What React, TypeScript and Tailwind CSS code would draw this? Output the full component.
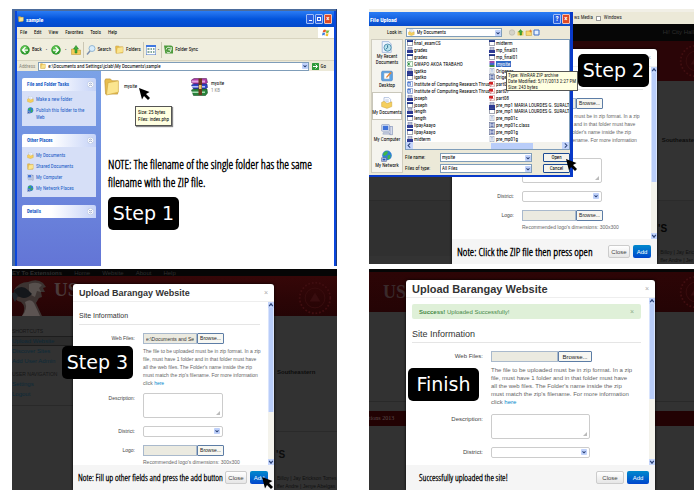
import React, { useId } from "react";

type Kind = "win" | "cpp" | "xls" | "doc" | "zip" | "txt" | "cls" | "pdf";

const leftFiles: [Kind, string][] = [
  ["win", "final_examCS"],
  ["cpp", "grades"],
  ["win", "grades"],
  ["xls", "GWAPO AKOA TRABAHO"],
  ["cpp", "igatko"],
  ["win", "igatko"],
  ["doc", "Institute of Computing Research Thrust"],
  ["doc", "Institute of Computing Research Thrust"],
  ["cpp", "joseph"],
  ["win", "joseph"],
  ["cpp", "length"],
  ["win", "length"],
  ["cpp", "lipayAaayo"],
  ["win", "lipayAaayo"],
  ["cpp", "midterm"],
];

const rightFiles: [Kind, string][] = [
  ["win", "midterm"],
  ["cpp", "mp_final01"],
  ["win", "mp_final01"],
  ["zip", "mysite"],
  ["txt", "Origenes"],
  ["cls", "Origenes"],
  ["pdf", "part06"],
  ["pdf", "part07"],
  ["pdf", "part08"],
  ["cpp", "pre_mp1 MARIA LOURDES G. SURALTA"],
  ["win", "pre_mp1 MARIA LOURDES G. SURALTA"],
  ["txt", "pre_mp01c"],
  ["cls", "pre_mp01c.class"],
  ["cls", "pre_mp01g"],
  ["txt", "pre_mp01g"],
];

function FileIcon({ kind }: { kind: Kind }) {
  return (
    <svg viewBox="0 0 12 12" className="size-1.5 shrink-0">
      {kind === "win" && (
        <>
          <rect x="0.5" y="1" width="11" height="10" fill="#fff" stroke="#444c66" />
          <rect x="0" y="0.5" width="12" height="3.5" fill="#1c2f86" />
        </>
      )}
      {kind === "cpp" && (
        <>
          <rect x="2" y="0" width="8" height="8" fill="#b9bed6" stroke="#6d7391" />
          <rect x="0" y="6" width="12" height="6" fill="#2d3a94" />
        </>
      )}
      {kind === "xls" && (
        <>
          <rect x="2" y="0.5" width="9" height="11" fill="#f4fff4" stroke="#4a8a55" />
          <path d="M1 3l5 6M6 3L1 9" stroke="#1f8a36" strokeWidth="2" />
        </>
      )}
      {kind === "doc" && (
        <>
          <rect x="2" y="0.5" width="9" height="11" fill="#fff" stroke="#4c6bb5" />
          <rect x="0" y="2" width="8" height="7" fill="#4b78cf" />
          <path d="M1 3l1.500 5L4 4l1.500 4L7 3" stroke="#fff" fill="none" />
        </>
      )}
      {kind === "zip" && (
        <>
          <rect x="1" y="0" width="10" height="4" fill="#9a4aa8" />
          <rect x="1" y="4" width="10" height="4" fill="#4565d0" />
          <rect x="1" y="8" width="10" height="4" fill="#3b8a4a" />
        </>
      )}
      {kind === "txt" && (
        <>
          <rect x="2" y="0.5" width="8" height="11" fill="#fff" stroke="#8391ab" />
          <path d="M4 3h4M4 5.500h4M4 8h4" stroke="#7291cc" />
        </>
      )}
      {kind === "cls" && (
        <>
          <rect x="1" y="0.5" width="10" height="11" fill="#dde2f0" stroke="#4b5680" />
          <path d="M3 3h6M3 6h6M3 9h6" stroke="#40549c" strokeWidth="1.500" />
        </>
      )}
      {kind === "pdf" && (
        <>
          <rect x="2" y="0.5" width="9" height="11" fill="#fff" stroke="#b88" />
          <path d="M0 2h8v5H0z" fill="#d22222" />
          <path d="M3 11l3-6 4 4" stroke="#d22222" fill="none" />
        </>
      )}
    </svg>
  );
}

function Folder({ className }: { className: string }) {
  return (
    <svg viewBox="0 0 20 20" preserveAspectRatio="none" className={className}>
      <path d="M1 4l1-2h6l2 2h7v14H2z" fill="#e7bd4e" stroke="#b98e2c" strokeWidth="0.700" />
      <path d="M5 6l13-2v12L3 19z" fill="#fbe58f" stroke="#d0a63f" strokeWidth="0.700" />
    </svg>
  );
}

function Cursor({ className }: { className: string }) {
  return (
    <svg viewBox="0 0 22 24" className={className}>
      <path d="M0 0l21 8-7 4 8 8-4 4-8-8-4 7z" fill="#000" />
    </svg>
  );
}

function Rar() {
  return (
    <svg viewBox="0 0 34 36" className="h-[18px] w-[17px] shrink-0">
      <path d="M1 4l5-3h25l2 8-4 3H6L1 9z" fill="#b23aa8" stroke="#431047" />
      <path d="M1 5h27v4H1z" fill="#e3a6df" />
      <path d="M1 14l5-2h26l1 7-4 3H5z" fill="#2f46c8" stroke="#131b5e" />
      <path d="M2 16h26v3H2z" fill="#b7c2f5" />
      <path d="M1 24l5-2h26l1 8-4 5H5z" fill="#27843b" stroke="#0c3a17" />
      <path d="M2 27h26v3H2z" fill="#a9dcb2" />
      <path d="M15 1h7v33h-7z" fill="#6b3a1e" />
      <path d="M16 14h5v8h-5z" fill="#e8c765" />
    </svg>
  );
}

function Computer({ className }: { className: string }) {
  return (
    <svg viewBox="0 0 20 20" className={className}>
      <rect x="1" y="1" width="13" height="11" rx="1" fill="#dfe6f5" stroke="#7d8db5" />
      <rect x="3" y="3" width="9" height="7" fill="#3f72d8" />
      <path d="M4 14h9l2 3H3z" fill="#c6cde0" stroke="#7d8db5" strokeWidth="0.700" />
      <rect x="15" y="4" width="4" height="14" fill="#d7dcec" stroke="#7d8db5" />
    </svg>
  );
}

function Globe({ className }: { className: string }) {
  return (
    <svg viewBox="0 0 20 20" className={className}>
      <circle cx="10" cy="9" r="8" fill="#2f7fd6" />
      <path d="M5 4q4-3 7-1l-2 4-4 3-3-2zM11 9l5-1-1 6-4 2z" fill="#3fb548" />
      <path d="M1 13h8v6H1z" fill="#dfe6f5" stroke="#44538a" />
      <path d="M2.500 14.500h5v3h-5z" fill="#2353b8" />
    </svg>
  );
}

function DocFolder({ className }: { className: string }) {
  return (
    <svg viewBox="0 0 20 20" className={className}>
      <path d="M5 1h8l3 3v10H5z" fill="#fff" stroke="#8aa3cf" />
      <path d="M7 5h6M7 8h6" stroke="#8aa3cf" />
      <path d="M1 9l4-2 5 4 8-3v8l-8 3-9-3z" fill="#f5cf5e" stroke="#c39a33" strokeWidth="0.700" />
    </svg>
  );
}

function RecentDocs({ className }: { className: string }) {
  return (
    <svg viewBox="0 0 20 20" className={className}>
      <path d="M2 1h11l4 4v14H2z" fill="#eef5ff" stroke="#7d9cd0" />
      <circle cx="11" cy="11" r="6" fill="#b9e3ee" stroke="#4f8fae" strokeWidth="1.500" />
      <path d="M11 7v4l-3 3" stroke="#23688a" strokeWidth="1.500" fill="none" />
    </svg>
  );
}

function DesktopPad({ className }: { className: string }) {
  return (
    <svg viewBox="0 0 20 20" className={className}>
      <rect x="1" y="2" width="18" height="16" rx="2" fill="#5aa5e8" stroke="#3f78c0" />
      <rect x="5" y="5" width="9" height="10" fill="#fff" stroke="#9ab" />
      <path d="M8 12l8-9 2 2-8 8z" fill="#e3873a" />
    </svg>
  );
}

function RoundArrow({ back }: { back?: boolean }) {
  return (
    <svg viewBox="0 0 20 20" className="size-[10px] shrink-0">
      <circle cx="10" cy="10" r="9.500" fill="#2f9a2f" />
      <circle cx="9" cy="8" r="6.500" fill="#5cc04e" />
      {back ? (
        <path d="M11 4l-6 6 6 6M5 10h11" stroke="#fff" strokeWidth="2.500" fill="none" />
      ) : (
        <path d="M9 4l6 6-6 6M15 10H4" stroke="#fff" strokeWidth="2.500" fill="none" />
      )}
    </svg>
  );
}

function DropMark() {
  return (
    <svg viewBox="0 0 10 10" className="pointer-events-none block size-[6px] shrink-0">
      <rect width="10" height="10" rx="1.500" fill="#bfd1fa" />
      <path d="M2.500 4L5 6.500 7.500 4" stroke="#2c4378" strokeWidth="1.700" fill="none" />
    </svg>
  );
}

function StepBadge({ children, className }: { children: string; className: string }) {
  return (
    <div
      className={
        "flex h-[33px] w-[71px] items-center justify-center rounded-[5px] bg-black font-['DejaVu_Sans',sans-serif] text-[19px] leading-none text-white " +
        className
      }
    >
      {children}
    </div>
  );
}

function TaskCard({ title, open, children }: { title: string; open?: boolean; children?: React.ReactNode }) {
  return (
    <section>
      <header className="flex h-[13px] items-center justify-between rounded-t-[2px] bg-linear-to-r from-white from-40% to-[#c6d3f7] pr-0.5 pl-[5px]">
        <h3 className="font-bold whitespace-nowrap text-[#215dc6]">{title}</h3>
        <svg viewBox="0 0 14 14" className="size-[7px] shrink-0">
          <circle cx="7" cy="7" r="6.500" fill="#fff" stroke="#9fb0dc" />
          {open ? (
            <path d="M4 6.500l3-3 3 3M4 10.500l3-3 3 3" stroke="#24418f" fill="none" />
          ) : (
            <path d="M4 3.500l3 3 3-3M4 7.500l3 3 3-3" stroke="#24418f" fill="none" />
          )}
        </svg>
      </header>
      {children && <div className="bg-[#d6dff7] pl-[5px]">{children}</div>}
    </section>
  );
}

function TaskLink({ icon, children }: { icon: React.ReactNode; children: React.ReactNode }) {
  return (
    <a href="#" className="flex items-start gap-0.5 leading-[7px] text-[#215dc6]">
      {icon}
      <span>{children}</span>
    </a>
  );
}

function ExplorerPanel() {
  return (
    <section className="relative flex min-h-[257px] flex-col border-r border-[#1d3a7a] bg-[#4c6c9c] pt-0.5 pl-[3px] font-['Roboto_Condensed','Liberation_Sans',sans-serif] text-[5px] leading-[7px] text-black">
      <div className="flex flex-1 flex-col border-r-2 border-l-2 border-[#0a46dc]">
        <header className="flex h-4 items-center justify-between bg-linear-to-b from-[#2a7cf5] via-[#0354dc] to-[#0549cb] pr-0.5 pl-px">
          <div className="flex items-center gap-0.5">
            <Folder className="size-[6px]" />
            <h2 className="text-[6px] font-bold text-white">sample</h2>
          </div>
          <div className="flex gap-px text-[7px] leading-none font-bold text-white">
            <button aria-label="Minimize" className="flex h-[10px] w-2 items-end justify-center rounded-[1px] border border-[#9fbdf5] bg-[#2a5fe0] pb-0.5">
              <span className="h-px w-[3px] bg-white" />
            </button>
            <button aria-label="Maximize" className="flex h-[10px] w-2 items-center justify-center rounded-[1px] border border-[#9fbdf5] bg-[#2a5fe0]">
              <span className="size-1 border border-white" />
            </button>
            <button aria-label="Close" className="flex h-[10px] w-2 items-center justify-center rounded-[1px] border border-[#f3c1b4] bg-[#dd4a26]">
              ×
            </button>
          </div>
        </header>
        <nav className="flex h-[11px] items-center justify-between bg-[#ece9d8] pl-[3px]">
          <div className="flex gap-[7px]">
            <span>File</span>
            <span>Edit</span>
            <span>View</span>
            <span>Favorites</span>
            <span>Tools</span>
            <span>Help</span>
          </div>
          <div className="flex h-full w-4 items-center justify-center bg-white">
            <svg viewBox="0 0 16 16" className="size-2">
              <path d="M3 2q3-2 5 0L7 7Q4 5 1 7z" fill="#e8582a" />
              <path d="M9 2q3 2 6 0l-2 5q-3 2-5 0z" fill="#7ab83c" />
              <path d="M1 8q3-2 5 0l-1 5q-2-2-5 0z" fill="#3f7fe0" />
              <path d="M8 8q2 2 5 0l-1 6q-3 1-5-1z" fill="#f4c12e" />
            </svg>
          </div>
        </nav>
        <div className="flex h-[22px] items-center gap-1 border-t border-[#d8d4c0] bg-[#f0eede] pl-[3px]">
          <RoundArrow back />
          <span className="-ml-0.5">Back</span>
          <span className="font-bold">·</span>
          <RoundArrow />
          <span className="font-bold">·</span>
          <svg viewBox="0 0 20 20" className="size-[10px] shrink-0">
            <path d="M1 8h7l2 2h9v9H1z" fill="#f2cc58" stroke="#b98e2c" />
            <path d="M8 16V8H5l5-7 5 7h-3v8z" fill="#3fae3a" stroke="#1e7a1f" />
          </svg>
          <span className="-ml-0.5 h-4 w-px bg-[#cbc7b4]" />
          <svg viewBox="0 0 20 20" className="-ml-0.5 size-[10px] shrink-0">
            <circle cx="12" cy="7" r="6" fill="#d7ecfb" stroke="#7ba5c9" strokeWidth="1.500" />
            <path d="M8 12l-6 7" stroke="#7c8fae" strokeWidth="3" />
          </svg>
          <span className="-ml-0.5">Search</span>
          <Folder className="size-[9px] shrink-0" />
          <span className="-ml-0.5">Folders</span>
          <span className="-ml-0.5 h-4 w-px bg-[#cbc7b4]" />
          <svg viewBox="0 0 20 20" className="-ml-0.5 size-[10px] shrink-0">
            <rect x="0.5" y="0.5" width="19" height="19" fill="#fff" stroke="#3f6fc7" />
            <rect width="20" height="4" fill="#3f78df" />
            <path d="M3 8h4M9 8h3M14 8h3M3 14h4M9 14h3M14 14h3" stroke="#5f8f7f" strokeWidth="3" />
          </svg>
          <span className="-ml-0.5 font-bold">·</span>
          <span className="-ml-0.5 h-4 w-px bg-[#cbc7b4]" />
          <svg viewBox="0 0 20 20" className="-ml-0.5 size-[9px] shrink-0">
            <path d="M0 1h16l4 3v15H3z" fill="#4d9b3c" />
            <path d="M5 10a5 5 0 0 1 9-3l2-2v6h-6l2-2M15 11a5 5 0 0 1-9 4" stroke="#fff" strokeWidth="1.800" fill="none" />
          </svg>
          <span className="-ml-0.5">Folder Sync</span>
        </div>
        <div className="flex h-[11px] items-center gap-[3px] border-t border-[#d8d4c0] bg-[#ece9d8] pr-2 pl-0.5">
          <label htmlFor="address" className="text-[#8a887c]">
            Address
          </label>
          <div className="flex h-[9px] min-w-0 flex-1 items-center gap-0.5 border border-[#7f9db9] bg-white pl-px">
            <Folder className="size-[6px] shrink-0" />
            <input
              id="address"
              className="min-w-0 flex-1 outline-none"
              defaultValue="e:\Documents and Settings\jclab\My Documents\sample"
            />
            <DropMark />
          </div>
          <button className="flex items-center gap-0.5">
            <svg viewBox="0 0 14 14" className="size-[7px]">
              <rect width="14" height="14" rx="1" fill="#2f9a3a" />
              <path d="M2 7h8M7 3l4 4-4 4" stroke="#fff" strokeWidth="2" fill="none" />
            </svg>
            Go
          </button>
        </div>
        <div className="flex flex-1">
          <aside className="flex w-[84px] shrink-0 flex-col gap-2 bg-linear-to-b from-[#7ba2e7] to-[#6375d6] px-[5px] pt-[7px]">
            <TaskCard title="File and Folder Tasks" open>
              <div className="flex h-[35px] flex-col gap-1 pt-[5px]">
                <TaskLink icon={<DocFolder className="size-[7px] shrink-0" />}>Make a new folder</TaskLink>
                <TaskLink icon={<Globe className="size-[7px] shrink-0" />}>
                  Publish this folder to the
                  <br />
                  Web
                </TaskLink>
              </div>
            </TaskCard>
            <TaskCard title="Other Places" open>
              <div className="flex h-[50px] flex-col gap-1 pt-[5px]">
                <TaskLink icon={<DocFolder className="size-[7px] shrink-0" />}>My Documents</TaskLink>
                <TaskLink icon={<Folder className="size-[7px] shrink-0" />}>Shared Documents</TaskLink>
                <TaskLink icon={<Computer className="size-[7px] shrink-0" />}>My Computer</TaskLink>
                <TaskLink icon={<Globe className="size-[7px] shrink-0" />}>My Network Places</TaskLink>
              </div>
            </TaskCard>
            <TaskCard title="Details" />
          </aside>
          <main className="relative min-w-0 flex-1 bg-white pt-[6px] pl-[3px]">
            <div className="flex gap-[54px]">
              <div className="flex items-center gap-1">
                <Folder className="h-[19px] w-4 shrink-0" />
                <span className="w-[13px]">mysite</span>
              </div>
              <div className="flex items-center gap-[3px]">
                <Rar />
                <span>
                  mysite
                  <br />
                  <span className="text-[#8c8c8c]">1 KB</span>
                </span>
              </div>
            </div>
            <Cursor className="absolute top-[17px] left-[38px] h-3 w-[11px]" />
            <div
              role="tooltip"
              className="absolute top-[35px] left-[34px] border border-[#555] bg-[#ffffe1] py-0.5 pr-0.5 pl-0.5 whitespace-nowrap shadow-[1px_1px_1px_#888]"
            >
              Size: 25 bytes
              <br />
              Files: index.php
            </div>
            <p className="mt-[60px] ml-1 font-['Open_Sans_Condensed_Light',sans-serif] text-[12px] leading-[18px] font-bold whitespace-nowrap">
              NOTE: The filename of the single folder has the same
              <br />
              filename with the ZIP file.
            </p>
            <StepBadge className="mt-[5px] ml-1">Step 1</StepBadge>
          </main>
        </div>
      </div>
    </section>
  );
}

function Scrollbar({ thumb }: { thumb: string }) {
  return (
    <div className="flex w-1.5 shrink-0 flex-col justify-between bg-[#f4f3ec]">
      <div>
        <svg viewBox="0 0 10 10" className="block size-1.5">
          <rect width="10" height="10" fill="#c4d5fc" />
          <path d="M2 7l3-4 3 4" stroke="#2c4378" strokeWidth="2" fill="none" />
        </svg>
        <div className={"border-x border-[#d9e4fd] bg-[#b9cdf9] " + thumb} />
      </div>
      <svg viewBox="0 0 10 10" className="block size-1.5">
        <rect width="10" height="10" fill="#c4d5fc" />
        <path d="M2 3l3 4 3-4" stroke="#2c4378" strokeWidth="2" fill="none" />
      </svg>
    </div>
  );
}

interface ModalProps {
  className: string;
  note: string;
  noteClass: string;
  bodyClass: string;
  thumb: string;
  wide?: boolean;
  alert?: boolean;
  path?: string;
}

function FileField({ id, value, wide }: { id: string; value?: string; wide?: boolean }) {
  return (
    <div className="flex h-[11px] items-stretch">
      <input
        id={id}
        readOnly
        defaultValue={value}
        className={
          "border border-[#a9b9cc] bg-[#ebeae0] px-0.5 text-[#333] outline-none " + (wide ? "w-[67px]" : "w-[54px]")
        }
      />
      <button
        className={
          "rounded-[1px] border border-[#5d7da6] bg-[#f7f7f2] leading-none text-[#222] " + (wide ? "w-[34px]" : "w-[27px]")
        }
      >
        Browse...
      </button>
    </div>
  );
}

function UploadModal({ className, note, noteClass, bodyClass, thumb, wide, alert, path }: ModalProps) {
  const id = useId();
  const label = "shrink-0 pt-px text-right text-[#444] " + (wide ? "w-[71px]" : "w-14");
  const row = "flex gap-2";
  const field = "rounded-[2px] border border-[#ccc] bg-white outline-none " + (wide ? "w-[99px]" : "w-20");
  return (
    <section
      role="dialog"
      aria-label="Upload Barangay Website"
      className={
        "relative flex flex-col overflow-hidden rounded-t-[3px] bg-white leading-2 shadow-[0_0_3px_#000] " +
        (wide ? "text-[6px] " : "text-[5px] ") +
        className
      }
    >
      <header className="flex h-[18px] shrink-0 items-center justify-between border-b border-[#eee] px-1.5">
        <h2 className={"font-bold whitespace-nowrap text-[#333] " + (wide ? "text-[11px]" : "text-[9px]")}>
          Upload Barangay Website
        </h2>
        <button aria-label="Close dialog" className="text-[7px] text-[#aaa]">
          ×
        </button>
      </header>
      <div className={"flex shrink-0 overflow-hidden " + bodyClass}>
        <div className="min-w-0 flex-1 pl-1.5">
          {alert && (
            <div className="mt-1.5 mr-2 flex h-[15px] items-center justify-between rounded-[2px] bg-[#dff0d8] px-[7px] text-[#468847]">
              <span>
                <b>Success!</b> Uploaded Successfully!
              </span>
              <button aria-label="Dismiss" className="text-[7px] text-[#8fae8a]">
                ×
              </button>
            </div>
          )}
          <h3
            className={
              "mr-2 border-b border-[#e5e5e5] pb-0.5 leading-3 text-[#333] " +
              (wide ? "pt-[9px] text-[9px]" : "pt-2 text-[7px]")
            }
          >
            Site Information
          </h3>
          <div className={"mt-2 " + row}>
            <label htmlFor={id + "web"} className={label}>
              Web Files:
            </label>
            <div>
              <FileField id={id + "web"} value={path} wide={wide} />
              <p className={"whitespace-nowrap text-[#666] " + (wide ? "mt-1" : "mt-[3px]")}>
                The file to be uploaded must be in zip format. In a zip
                <br />
                file, must have 1 folder and in that folder must have
                <br />
                all the web files. The Folder's name inside the zip
                <br />
                must match the zip's filename. For more information
                <br />
                click{" "}
                <a href="#" className="text-[#0088cc]">
                  here
                </a>
              </p>
            </div>
          </div>
          <div className={row + (wide ? " mt-2" : " mt-1.5")}>
            <label htmlFor={id + "desc"} className={label}>
              Description:
            </label>
            <div className="relative">
              <textarea id={id + "desc"} className={"block h-[25px] resize-none " + field} />
              <svg viewBox="0 0 8 8" className="absolute right-[3px] bottom-[3px] size-1">
                <path d="M0 8l8-8v8z" fill="#bbb" />
              </svg>
            </div>
          </div>
          <div className={"mt-2 " + row}>
            <label htmlFor={id + "dist"} className={label}>
              District:
            </label>
            <div className="relative">
              <select id={id + "dist"} className={"block h-[11px] appearance-none " + field}>
                <option></option>
              </select>
              <span className="absolute top-0.5 right-[3px]">
                <DropMark />
              </span>
            </div>
          </div>
          {!alert && (
            <div className={"mt-2 " + row}>
              <label htmlFor={id + "logo"} className={label}>
                Logo:
              </label>
              <div>
                <FileField id={id + "logo"} />
                <p className="mt-0.5 whitespace-nowrap text-[#666]">Recommended logo's dimensions: 300x300</p>
              </div>
            </div>
          )}
        </div>
        <Scrollbar thumb={thumb} />
      </div>
      <footer className="flex flex-1 items-center gap-[3px] bg-[#f5f5f5] py-1.5 pr-1.5 pl-[5px]">
        <p
          className={
            "min-w-0 flex-1 font-['Open_Sans_Condensed_Light',sans-serif] font-bold whitespace-nowrap text-black " +
            noteClass
          }
        >
          {note}
        </p>
        <button
          className={
            "h-[13px] shrink-0 rounded-[2px] border border-[#ccc] bg-linear-to-b from-white to-[#e6e6e6] text-[6px] leading-none text-[#444] " +
            (wide ? "w-7" : "w-[22px]")
          }
        >
          Close
        </button>
        <button
          className={
            "h-[13px] shrink-0 rounded-[2px] bg-linear-to-b from-[#0088cc] to-[#0044cc] text-[6px] leading-none text-white " +
            (wide ? "w-[22px]" : "w-[18px]")
          }
        >
          Add
        </button>
      </footer>
    </section>
  );
}

function Seal({ className }: { className: string }) {
  return (
    <svg viewBox="0 0 40 40" className={className}>
      <circle cx="20" cy="20" r="17" fill="none" stroke="#3f0e10" strokeWidth="2" strokeDasharray="2 2" />
      <circle cx="20" cy="20" r="11" fill="none" stroke="#3a0d0f" strokeWidth="1" />
      <path d="M14 24l6-10 6 10z" fill="#380d0f" />
    </svg>
  );
}

function PlaceButton({ icon, children, active }: { icon: React.ReactNode; children: React.ReactNode; active?: boolean }) {
  return (
    <button
      className={
        "flex w-full flex-1 flex-col items-center justify-center leading-[6px] " +
        (active ? "border border-[#c9c7ba] bg-white" : "")
      }
    >
      {icon}
      <span className="whitespace-nowrap">{children}</span>
    </button>
  );
}

function FileList({ files }: { files: [Kind, string][] }) {
  return (
    <ul className="flex w-[82px] shrink-0 flex-col">
      {files.map(([kind, name], i) => (
        <li key={i} className="flex min-h-0 flex-1 items-center gap-px whitespace-nowrap">
          <FileIcon kind={kind} />
          <span className={kind === "zip" ? "bg-[#316ac5] px-px leading-[6px] text-white" : "leading-[6px]"}>{name}</span>
        </li>
      ))}
    </ul>
  );
}

function FileDialog() {
  return (
    <section
      role="dialog"
      aria-label="File Upload"
      className="absolute top-[3px] left-0 w-[204px] border-r-[3px] border-b-2 border-[#0839c8] bg-[#ece9d8] font-['Roboto_Condensed','Liberation_Sans',sans-serif] text-[5px] leading-[7px] text-black"
    >
      <header className="flex h-[14px] items-center justify-between bg-linear-to-b from-[#2a7cf5] to-[#0549cb] pl-px">
        <h2 className="text-[6px] font-bold text-white">File Upload</h2>
        <div className="flex gap-px text-[7px] leading-none font-bold text-white">
          <button className="h-[10px] w-2 rounded-[1px] border border-[#9fbdf5] bg-[#2a5fe0]">?</button>
          <button className="h-[10px] w-2 rounded-[1px] border border-[#f3c1b4] bg-[#dd4a26]">×</button>
        </div>
      </header>
      <div className="flex h-[13px] items-center gap-[3px] pl-[18px]">
        <label htmlFor="lookin">Look in:</label>
        <div className="relative flex h-[9px] w-24 items-center border border-[#7f9db9] bg-white pl-px">
          <DocFolder className="size-[7px] shrink-0" />
          <select id="lookin" className="min-w-0 flex-1 appearance-none bg-transparent pl-0.5 outline-none">
            <option>My Documents</option>
          </select>
          <DropMark />
        </div>
        <svg viewBox="0 0 64 14" className="ml-1 h-[7px] w-8">
          <circle cx="6" cy="7" r="5.500" fill="#d5d3c9" stroke="#aaa89e" />
          <path d="M17 5h12v8H17z" fill="#f2cc58" />
          <path d="M22 12V6h-3l4-5 4 5h-2v6z" fill="#3fae3a" stroke="#1e7a1f" />
          <path d="M34 4h11v9H34z" fill="#f7d874" stroke="#c39a33" />
          <path d="M43 0l1 3 3 1-3 1-1 3-1-3-3-1 3-1z" fill="#e9782a" />
          <path d="M50 2h10v10H50z" fill="#e5f0ff" stroke="#3f6fc7" strokeWidth="2" />
        </svg>
      </div>
      <div className="flex gap-0.5 pb-0.5 pl-0.5">
        <nav className="flex w-8 shrink-0 flex-col border border-[#d0cdbf] bg-[#f5f4ee]">
          <PlaceButton icon={<RecentDocs className="size-3" />}>
            My Recent
            <br />
            Documents
          </PlaceButton>
          <PlaceButton icon={<DesktopPad className="size-3" />}>Desktop</PlaceButton>
          <PlaceButton active icon={<DocFolder className="size-3" />}>
            My Documents
          </PlaceButton>
          <PlaceButton icon={<Computer className="size-3" />}>My Computer</PlaceButton>
          <PlaceButton icon={<Globe className="size-3" />}>My Network</PlaceButton>
        </nav>
        <div className="min-w-0 flex-1">
          <div className="border border-[#7f9db9] bg-white">
            <div className="flex h-[102px] overflow-hidden pl-px">
              <FileList files={leftFiles} />
              <FileList files={rightFiles} />
            </div>
            <div className="flex h-[7px] items-center justify-between bg-[#f3f2ec]">
              <svg viewBox="0 0 10 10" className="size-[7px]">
                <rect width="10" height="10" fill="#c4d5fc" />
                <path d="M6 2L3 5l3 3" stroke="#2c4378" strokeWidth="1.500" fill="none" />
              </svg>
              <div className="ml-12 h-1.5 w-[42px] bg-[#b9cdf9]" />
              <svg viewBox="0 0 10 10" className="size-[7px]">
                <rect width="10" height="10" fill="#c4d5fc" />
                <path d="M4 2l3 3-3 3" stroke="#2c4378" strokeWidth="1.500" fill="none" />
              </svg>
            </div>
          </div>
          <div className="mt-[3px] grid grid-cols-[32px_92px_27px] items-center gap-x-[3px] gap-y-0.5">
            <label htmlFor="filename">File name:</label>
            <div className="flex h-[9px] items-center border border-[#7f9db9] bg-white pl-px">
              <input id="filename" className="min-w-0 flex-1 outline-none" defaultValue="mysite" />
              <DropMark />
            </div>
            <button className="ml-2 h-[9px] w-[27px] rounded-[1px] border border-[#1c4b94] bg-[#f5f4ee] leading-none">Open</button>
            <label htmlFor="filetype">Files of type:</label>
            <div className="flex h-[9px] items-center border border-[#7f9db9] bg-white pl-px">
              <select id="filetype" className="min-w-0 flex-1 appearance-none outline-none">
                <option>All Files</option>
              </select>
              <DropMark />
            </div>
            <button className="ml-2 h-[9px] w-[27px] rounded-[1px] border border-[#1c4b94] bg-[#f5f4ee] leading-none">Cancel</button>
          </div>
        </div>
      </div>
    </section>
  );
}

function OpenPanel() {
  return (
    <section className="relative overflow-hidden bg-[#333]">
      <div className="absolute inset-x-0 top-0">
        <div className="h-[3px] bg-[#f1efe6]" />
        <div className="flex h-3 items-center gap-[3px] bg-[#ece9d8] pl-[205px] font-['Roboto_Condensed',sans-serif] text-[5px] whitespace-nowrap text-[#222]">
          ws Media
          <span className="size-[5px] border border-[#999] bg-white" />
          Windows
        </div>
        <div className="flex h-[17px] items-center justify-end bg-[#060606] text-[6px] whitespace-nowrap text-[#2e2e2e]">
          Hi! City Hall
        </div>
        <div className="flex h-10 items-center justify-end overflow-hidden bg-[#2a0507]">
          <Seal className="-mr-5 size-9 shrink-0" />
        </div>
        <p className="mt-[55px] text-right text-[6px] leading-2 font-bold text-[#0c0c0c]">Southeaste</p>
        <div className="mt-14 flex h-[56px] items-center border-t border-[#2b2b2b] bg-[#303030] pl-[289px] text-[10px] font-bold text-[#050505]">
          'S
        </div>
      </div>
      <p className="absolute right-0 bottom-0 text-[5px] leading-2 whitespace-nowrap text-[#101010]">
        Billoy | Jay Eric
        <br />
        ffer Andre | Jer
      </p>
      <UploadModal
        className="mt-10 mr-[37px] ml-[83px]"
        bodyClass="h-[172px]"
        thumb="h-[109px]"
        note="Note: Click the ZIP file then press open"
        noteClass="text-[11px]"
      />
      <FileDialog />
      <div
        role="tooltip"
        className="absolute top-[62px] left-[137px] border border-[#555] bg-[#ffffe1] px-px font-['Roboto_Condensed','Liberation_Sans',sans-serif] text-[5px] leading-[6px] whitespace-nowrap text-[#222]"
      >
        Type: WinRAR ZIP archive
        <br />
        Date Modified: 5/17/2013 2:27 PM
        <br />
        Size: 243 bytes
      </div>
      <StepBadge className="absolute top-[45px] left-[209px]">Step 2</StepBadge>
      <Cursor className="absolute top-[150px] left-[197px] h-3 w-[11px]" />
    </section>
  );
}

function FillPanel() {
  return (
    <section className="relative overflow-hidden bg-[#323232]">
      <div className="absolute inset-0">
        <div className="flex h-[7px] items-center gap-3 overflow-hidden bg-[#060606] text-[6px] leading-none text-[#2e2e2e]">
          <b>EY To Extensions</b>
          <span>Home</span>
          <span>Website</span>
          <span>About</span>
          <span>Help</span>
        </div>
        <div className="flex h-10 items-end justify-between bg-linear-to-b from-[#360708] to-[#240405] pr-1">
          <div className="flex items-start gap-2">
            <svg viewBox="0 0 34 38" className="h-[38px] w-[34px]">
              <path d="M2 12Q7 4 16 4q9-4 15 1l3 4-3 1 2 4-4 0 1 5-3 1-3 5 6 13H10q5-9-1-14-7 0-7-12z" fill="#3c3331" />
              <path d="M17 6q8-3 13 1l-3 3 2 4-4-1-2 6-6-3z" fill="#57504d" />
              <path d="M2 12q8-6 14 0l4 4q-6 6-12 3-6-1-6-7z" fill="#15171b" />
              <path d="M0 15q4-2 6 3l-3 6q-3-4-3-9z" fill="#20262c" />
              <path d="M13 24q6-4 9 1l6 13H10q6-7 3-14z" fill="#5c5452" />
            </svg>
            <span className="font-['Liberation_Serif',serif] text-[19px] leading-[24px] font-bold text-[#4a3a3a]">US</span>
          </div>
          <Seal className="size-9" />
        </div>
        <div className="w-[61px] border-b border-[#292929] pt-[10px] text-[6px] leading-[10px] whitespace-nowrap text-[#0c2a39]">
          <p className="text-[5px] text-[#161616]">SHORTCUTS</p>
          <a href="#" className="block border-y border-[#1d1d1d] bg-[#2c2c2c] leading-2">
            Upload Website
          </a>
          <a href="#" className="block">Discover Sites</a>
          <a href="#" className="block">Add User Admin</a>
          <p className="pt-[3px] text-[5px] text-[#161616]">USER NAVIGATION</p>
          <a href="#" className="block">Settings</a>
          <a href="#" className="block pb-1.5">Logout</a>
        </div>
      </div>
      <div className="absolute top-[99px] right-0 w-[61px] text-[#0c0c0c]">
        <p className="pl-px text-[6px] leading-2 font-bold">Southeastern</p>
        <p className="mt-[55px] border-t border-[#2a2a2a] pt-[15px] text-[10px] leading-4 font-bold">'S</p>
      </div>
      <p className="absolute bottom-0 right-0 w-[61px] pl-px text-[5px] leading-2 whitespace-nowrap text-[#101010]">
        Billoy | Jay Erickson Torres
        <br />
        ffer Andre | Jenye Abelgas
      </p>
      <UploadModal
        className="mt-[15px] mr-[63px] ml-[61px]"
        bodyClass="h-[163px]"
        thumb="h-[104px]"
        path="e:\Documents and Set"
        note="Note: Fill up other fields and press the add button"
        noteClass="text-[9px]"
      />
      <StepBadge className="absolute top-[77px] left-[50px]">Step 3</StepBadge>
      <Cursor className="absolute top-[208px] left-[250px] h-3 w-[11px]" />
    </section>
  );
}

function FinishPanel() {
  return (
    <section className="relative overflow-hidden bg-[#323232]">
      <div className="absolute inset-0">
        <div className="h-[3px] bg-[#060606]" />
        <div className="flex h-10 items-center justify-between bg-linear-to-b from-[#2d0506] to-[#240405]">
          <span className="pl-[14px] font-['Liberation_Serif',serif] text-[18px] leading-none font-bold text-[#3a2a2b]">US</span>
          <Seal className="-mr-5 size-9 shrink-0" />
        </div>
        <div className="h-[90px] border-b border-[#292929]" />
        <div className="mt-[9px] flex h-[15px] items-center bg-[#220203] font-['Liberation_Serif',serif] text-[6px] text-[#5c4a4a]">
          tions 2013
        </div>
      </div>
      <UploadModal
        className="mt-[11px] mr-[39px] ml-[37px]"
        bodyClass="h-[167px]"
        thumb="h-[95px]"
        note="Successfully uploaded the site!"
        noteClass="pl-2 text-[9px]"
        wide
        alert
      />
      <StepBadge className="absolute top-[99px] left-[39px]">Finish</StepBadge>
    </section>
  );
}

export default function App() {
  return (
    <div className="grid min-h-screen grid-cols-2 content-start items-start gap-x-8 gap-y-[3px] bg-white pt-[9px] pr-1.5 pl-3 font-['Liberation_Sans',Arial,sans-serif]">
      <ExplorerPanel />
      <OpenPanel />
      <FillPanel />
      <FinishPanel />
    </div>
  );
}
